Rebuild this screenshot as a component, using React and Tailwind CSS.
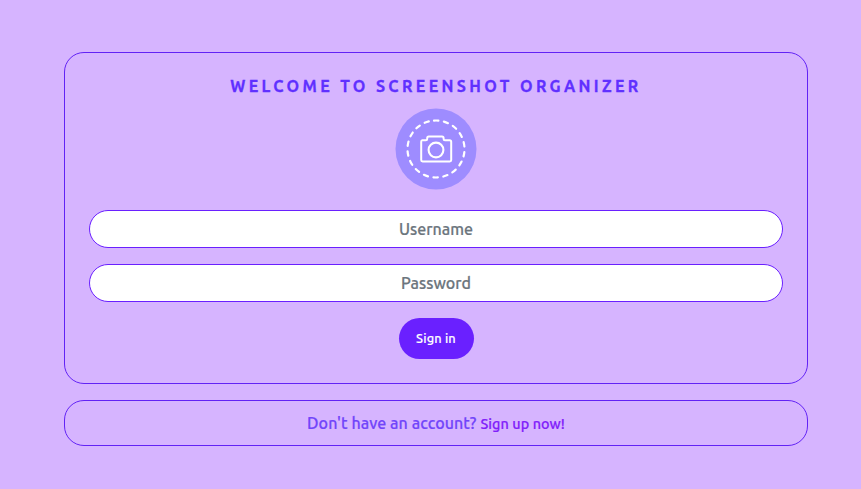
import React from "react";

function Logo() {
  return (
    <svg className="block h-[82px] w-[82px]" viewBox="-41 -41 82 82" fill="none" stroke="#fff">
      <circle r="40.5" fill="#9e8cff" stroke="none" />
      <circle r="28.5" strokeWidth="2.2" strokeLinecap="round" strokeDasharray="4.4 5.548" transform="rotate(-94)" />
      <path
        d="M-13.8 -8.8h3.6q1.4 0 1.4 -1.3v-.7q0 -1.6 1.6 -1.6h13.2q1.6 0 1.6 1.6v.7q0 1.3 1.4 1.3h4.6q1.6 0 1.6 1.6v18.2q0 1.4 -1.4 1.4h-27.2q-1.4 0 -1.4 -1.4v-18.2q0 -1.6 1 -1.6z"
        strokeWidth="2"
        strokeLinejoin="round"
      />
      <circle cx="0" cy="1" r="7.4" strokeWidth="2.1" />
    </svg>
  );
}

const field =
  "block h-[38px] w-full rounded-full border border-[#6a20ff] bg-white px-3 text-center text-[16px] font-medium text-[#6c757d] outline-none placeholder:text-[#6c757d] placeholder:opacity-100 [-webkit-text-stroke:0.2px]";

export default function App() {
  return (
    <main className="h-[489px] w-full bg-[#d6b4ff] pl-16 pr-[53px] pt-[52px] font-['Ubuntu','Noto_Sans',sans-serif] font-medium">
      <form className="flex h-[332px] flex-col items-center rounded-[20px] border border-[#6222f5] px-6 pt-6" onSubmit={(e) => e.preventDefault()}>
        <h1 className="h-[31px] whitespace-nowrap text-[16px] leading-[19px] font-bold tracking-[3.36px] text-[#6030ff] [-webkit-text-stroke:0.3px]">
          WELCOME TO SCREENSHOT ORGANIZER
        </h1>
        <Logo />
        <input className={field + " mt-5"} placeholder="Username" />
        <input className={field + " mt-4"} placeholder="Password" type="password" />
        <button className="mt-4 h-[41px] w-[75px] rounded-full bg-[#6a20ff] text-[12.8px] tracking-[0.15px] text-white [-webkit-text-stroke:0.15px]">Sign in</button>
      </form>
      <div className="mt-4 flex h-[46px] items-baseline justify-center gap-1 whitespace-nowrap rounded-[20px] border border-[#6222f5] pt-[10px] text-[16px] leading-6 tracking-[0.06px] text-[#7145fa] [-webkit-text-stroke:0.2px]">
        <span>Don't have an account?</span>
        <a className="text-[14.4px] text-[#8120fa]" href="#signup">Sign up now!</a>
      </div>
    </main>
  );
}
